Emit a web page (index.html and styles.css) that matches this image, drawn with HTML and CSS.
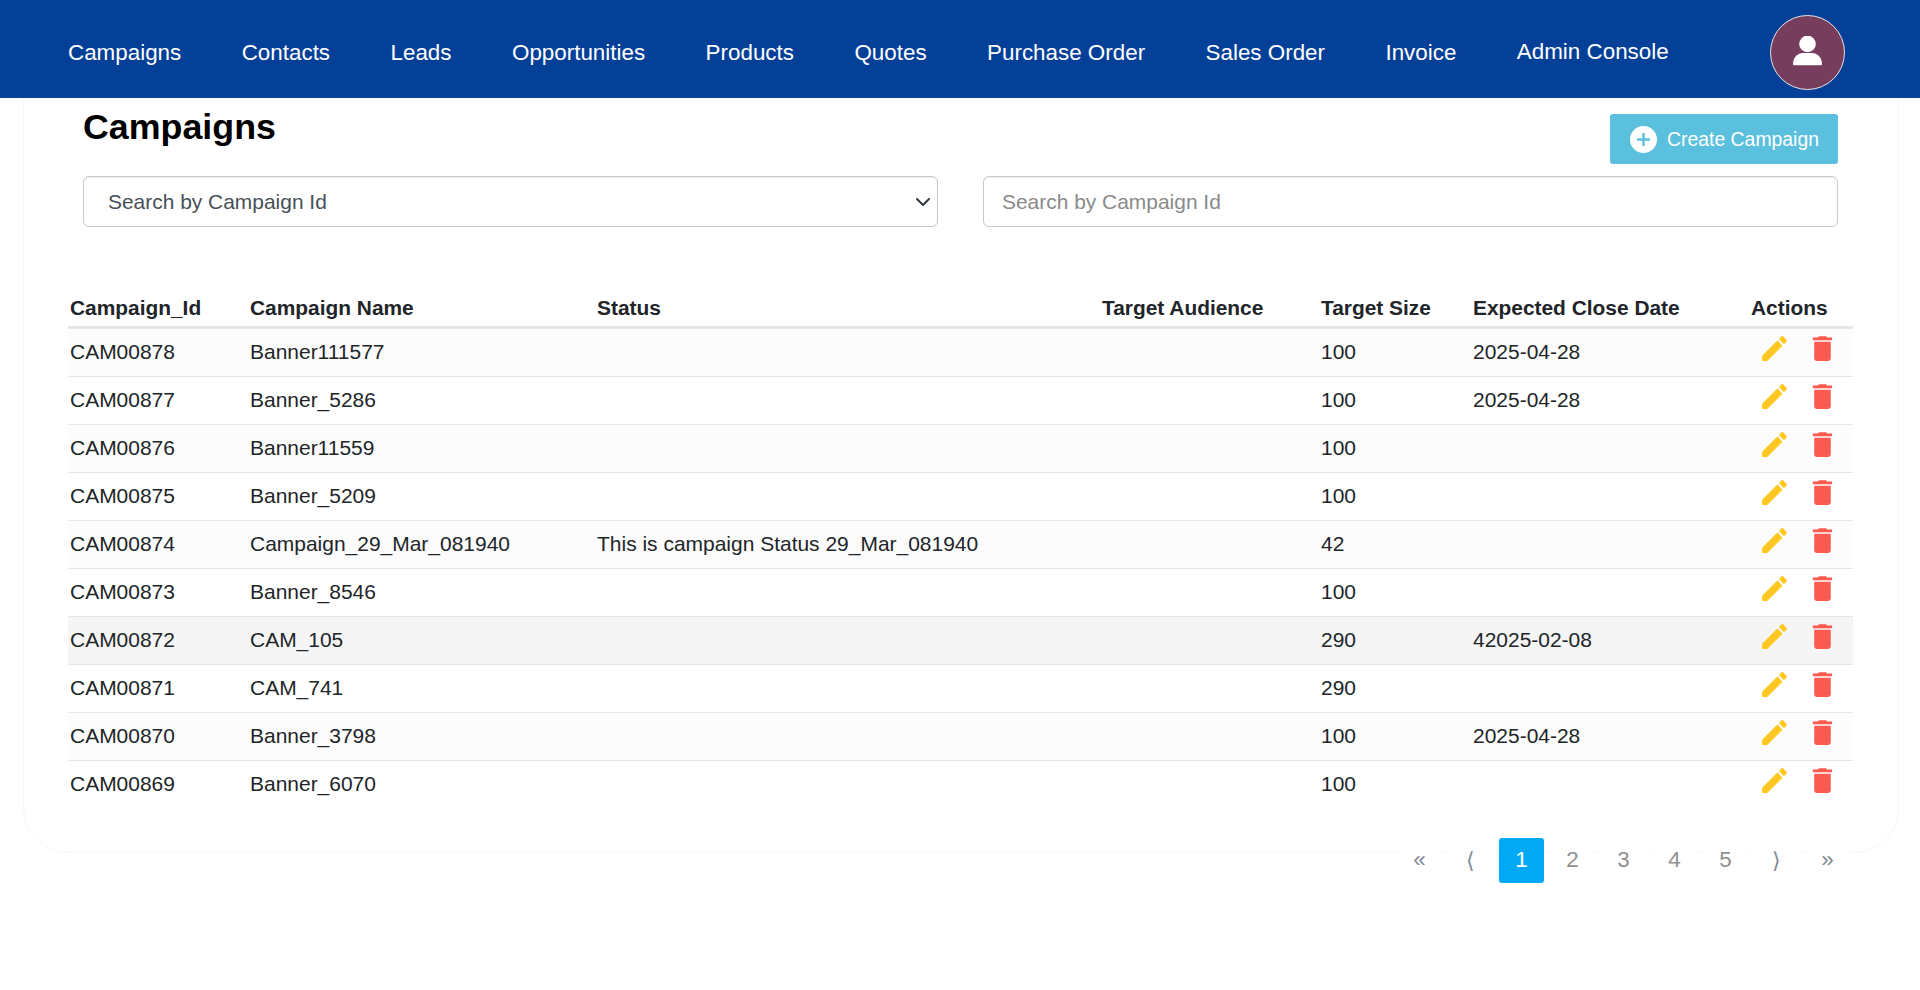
FILE: index.html
```
<!DOCTYPE html>
<html lang="en">
<head>
<meta charset="utf-8">
<title>Campaigns</title>
<link rel="stylesheet" href="styles.css">
</head>
<body>
<svg class="defs" width="0" height="0" aria-hidden="true">
  <symbol id="i-edit" viewBox="0 0 24 24"><path d="M3 17.25V21h3.75L17.81 9.94l-3.75-3.75L3 17.25zM20.71 7.04c.39-.39.39-1.02 0-1.41l-2.34-2.34c-.39-.39-1.02-.39-1.41 0l-1.83 1.83 3.75 3.75 1.83-1.83z"/></symbol>
  <symbol id="i-del" viewBox="0 0 24 24"><path d="M6 19c0 1.1.9 2 2 2h8c1.1 0 2-.9 2-2V7H6v12zM19 4h-3.5l-1-1h-5l-1 1H5v2h14V4z"/></symbol>
</svg>
<nav class="navbar">
  <a class="nav-link">Campaigns</a>
  <a class="nav-link">Contacts</a>
  <a class="nav-link">Leads</a>
  <a class="nav-link">Opportunities</a>
  <a class="nav-link">Products</a>
  <a class="nav-link">Quotes</a>
  <a class="nav-link">Purchase Order</a>
  <a class="nav-link">Sales Order</a>
  <a class="nav-link">Invoice</a>
  <a class="nav-link nav-admin">Admin Console</a>
  <div class="avatar">
    <svg viewBox="0 0 29 30" width="29" height="30"><circle cx="14.5" cy="8" r="8.3" fill="#fff"/><path d="M0 28.5C0 20 6 17 10 17h9c4 0 10 3 10 11.5 0 .5-.3.8-.8.8H.8c-.5 0-.8-.3-.8-.8z" fill="#fff"/></svg>
  </div>
</nav>
<main class="card">
  <div class="head-row">
    <h1 class="title">Campaigns</h1>
    <button class="btn-create"><span class="plus"><svg viewBox="0 0 27 27" width="27" height="27"><circle cx="13.5" cy="13.5" r="13.5" fill="#fff"/><path d="M13.5 7v13M7 13.5h13" stroke="#5bc0de" stroke-width="2.4" fill="none"/></svg></span>Create Campaign</button>
  </div>
  <div class="filters">
    <div class="select-box"><span>Search by Campaign Id</span><svg viewBox="0 0 16 16" width="16" height="16"><path d="M2 5l6 6 6-6" fill="none" stroke="#343a40" stroke-width="2" stroke-linecap="round" stroke-linejoin="round"/></svg></div>
    <input class="search" type="text" placeholder="Search by Campaign Id">
  </div>
  <table class="grid">
    <colgroup><col class="c1"><col class="c2"><col class="c3"><col class="c4"><col class="c5"><col class="c6"><col class="c7"></colgroup>
    <thead>
      <tr><th>Campaign_Id</th><th>Campaign Name</th><th>Status</th><th>Target Audience</th><th>Target Size</th><th>Expected Close Date</th><th>Actions</th></tr>
    </thead>
    <tbody>
      <tr><td>CAM00878</td><td>Banner111577</td><td></td><td></td><td>100</td><td>2025-04-28</td><td><div class="acts"><svg class="ic edit"><use href="#i-edit"/></svg><svg class="ic del"><use href="#i-del"/></svg></div></td></tr>
      <tr><td>CAM00877</td><td>Banner_5286</td><td></td><td></td><td>100</td><td>2025-04-28</td><td><div class="acts"><svg class="ic edit"><use href="#i-edit"/></svg><svg class="ic del"><use href="#i-del"/></svg></div></td></tr>
      <tr><td>CAM00876</td><td>Banner11559</td><td></td><td></td><td>100</td><td></td><td><div class="acts"><svg class="ic edit"><use href="#i-edit"/></svg><svg class="ic del"><use href="#i-del"/></svg></div></td></tr>
      <tr><td>CAM00875</td><td>Banner_5209</td><td></td><td></td><td>100</td><td></td><td><div class="acts"><svg class="ic edit"><use href="#i-edit"/></svg><svg class="ic del"><use href="#i-del"/></svg></div></td></tr>
      <tr><td>CAM00874</td><td>Campaign_29_Mar_081940</td><td>This is campaign Status 29_Mar_081940</td><td></td><td>42</td><td></td><td><div class="acts"><svg class="ic edit"><use href="#i-edit"/></svg><svg class="ic del"><use href="#i-del"/></svg></div></td></tr>
      <tr><td>CAM00873</td><td>Banner_8546</td><td></td><td></td><td>100</td><td></td><td><div class="acts"><svg class="ic edit"><use href="#i-edit"/></svg><svg class="ic del"><use href="#i-del"/></svg></div></td></tr>
      <tr class="hover"><td>CAM00872</td><td>CAM_105</td><td></td><td></td><td>290</td><td>42025-02-08</td><td><div class="acts"><svg class="ic edit"><use href="#i-edit"/></svg><svg class="ic del"><use href="#i-del"/></svg></div></td></tr>
      <tr><td>CAM00871</td><td>CAM_741</td><td></td><td></td><td>290</td><td></td><td><div class="acts"><svg class="ic edit"><use href="#i-edit"/></svg><svg class="ic del"><use href="#i-del"/></svg></div></td></tr>
      <tr><td>CAM00870</td><td>Banner_3798</td><td></td><td></td><td>100</td><td>2025-04-28</td><td><div class="acts"><svg class="ic edit"><use href="#i-edit"/></svg><svg class="ic del"><use href="#i-del"/></svg></div></td></tr>
      <tr><td>CAM00869</td><td>Banner_6070</td><td></td><td></td><td>100</td><td></td><td><div class="acts"><svg class="ic edit"><use href="#i-edit"/></svg><svg class="ic del"><use href="#i-del"/></svg></div></td></tr>
    </tbody>
  </table>
</main>
<ul class="pager">
  <li class="pg pg-arrow">«</li>
  <li class="pg pg-arrow">⟨</li>
  <li class="pg active">1</li>
  <li class="pg">2</li>
  <li class="pg">3</li>
  <li class="pg">4</li>
  <li class="pg">5</li>
  <li class="pg pg-arrow">⟩</li>
  <li class="pg pg-arrow">»</li>
</ul>
</body>
</html>
```
FILE: styles.css
```
* { box-sizing: border-box; }
html, body { margin: 0; padding: 0; background: #fff; }
body { font-family: "Liberation Sans", Arial, sans-serif; color: #212529; height: 990px; overflow: hidden; }
.defs { display: block; height: 0; }

.navbar {
  position: relative;
  z-index: 2;
  display: flex;
  align-items: center;
  gap: 60.45px;
  height: 98px;
  padding-left: 68px;
  background: #044098;
}
.nav-link { color: #fff; font-size: 22.4px; line-height: 28px; margin-top: 7px; }
.nav-admin { margin-top: 5px; }
.avatar {
  position: absolute;
  left: 1770px;
  top: 15px;
  width: 75px;
  height: 75px;
  border-radius: 50%;
  background: #763d5c;
  border: 1px solid #e6e6e6;
  display: flex;
  align-items: center;
  justify-content: center;
  padding-bottom: 3px;
}

.card {
  margin: -40px 21px 0 23px;
  padding: 40px 46px 44px 44px;
  height: 795px;
  border: 1px solid #f7f7f7;
  border-radius: 45px;
  background: #fff;
}
.head-row {
  display: flex;
  justify-content: space-between;
  align-items: flex-start;
  padding: 0 14px 0 15px;
  height: 77px;
}
.title { margin: 6px 0 0; font-size: 35.8px; line-height: 44px; font-weight: 700; color: #000; }
.btn-create {
  margin-top: 15px;
  width: 228px;
  height: 50px;
  display: flex;
  align-items: center;
  gap: 10px;
  padding: 0 0 0 20px;
  border: 0;
  border-radius: 3px;
  background: #5bc0de;
  color: #fff;
  font: 19.4px "Liberation Sans", Arial, sans-serif;
}
.plus { display: flex; }
.filters {
  display: grid;
  grid-template-columns: 855px 855px;
  column-gap: 45px;
  padding: 0 15px;
}
.select-box, .search {
  height: 51px;
  border: 1px solid #c8c8c8;
  border-radius: 6px;
  font: 20.95px "Liberation Sans", Arial, sans-serif;
  background: #fff;
  box-shadow: inset 0 1px 1px rgba(0,0,0,.08);
}
.select-box {
  display: flex;
  align-items: center;
  justify-content: space-between;
  padding: 0 6px 0 24px;
  color: #495057;
}
.search { padding: 0 18px; width: 100%; color: #495057; }
.search::placeholder { color: #8a8a8a; opacity: 1; }

.grid {
  table-layout: fixed;
  width: 1785px;
  margin-top: 51px;
  border-collapse: collapse;
  font-size: 20.97px;
}
.c1 { width: 180px; }
.c2 { width: 347px; }
.c3 { width: 505px; }
.c4 { width: 219px; }
.c5 { width: 152px; }
.c6 { width: 278px; }
.c7 { width: 104px; }
.grid th {
  height: 49px;
  padding: 12px 2px 0;
  text-align: left;
  font-weight: 700;
  font-size: 20.9px;
  white-space: nowrap;
  border-bottom: 3px solid #e6e6e6;
}
.grid td {
  height: 48px;
  padding: 0 2px;
  white-space: nowrap;
  border-bottom: 1px solid #e6e6e6;
}
.grid tbody tr:first-child td { height: 49px; padding-bottom: 1px; }
.grid tbody tr:nth-child(odd) td { background: #fcfcfc; }
.grid tbody tr.hover td { background: #f5f5f5; }
.grid tbody tr:last-child td { border-bottom: 0; background: #fff; }
.acts { display: flex; gap: 15px; padding-left: 7px; margin-top: -7px; }
.ic { width: 33px; height: 33px; display: block; }
.edit { fill: #ffc720; }
.del { fill: #fa5a50; }

.pager {
  list-style: none;
  display: flex;
  gap: 6px;
  margin: -15px 0 0;
  padding: 0 0 0 1397px;
  position: relative;
}
.pg {
  width: 45px;
  height: 45px;
  background: #fff;
  border-radius: 3px;
  display: flex;
  align-items: center;
  justify-content: center;
  font-size: 22.4px;
  padding-bottom: 1px;
  color: #909090;
}
.pg-arrow { color: #7f8b97; font-size: 22.4px; }
.active { background: #03a9f4; color: #fff; }
```
